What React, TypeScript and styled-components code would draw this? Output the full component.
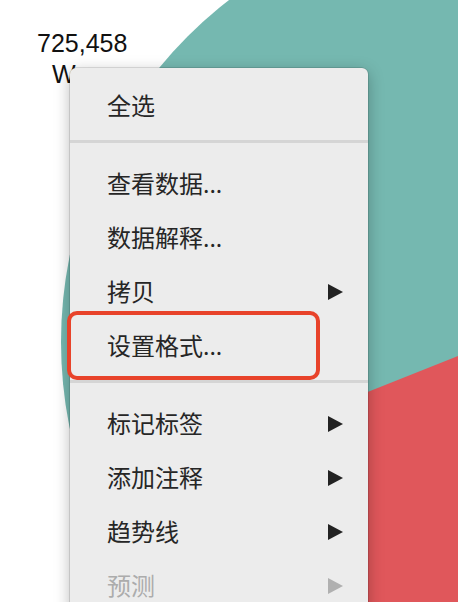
import { FC } from "react";
import styled, { createGlobalStyle } from "styled-components";

const GlobalStyle = createGlobalStyle`
  html, body {
    margin: 0;
    padding: 0;
    background: #ffffff;
  }
  body {
    font-family: "Noto Sans", "Noto Sans CJK SC", sans-serif;
  }
`;

interface MenuEntry {
  label: string;
  submenu?: boolean;
  disabled?: boolean;
  highlighted?: boolean;
}

const groups: MenuEntry[][] = [
  [{ label: "全选" }],
  [
    { label: "查看数据..." },
    { label: "数据解释..." },
    { label: "拷贝", submenu: true },
    { label: "设置格式...", highlighted: true },
  ],
  [
    { label: "标记标签", submenu: true },
    { label: "添加注释", submenu: true },
    { label: "趋势线", submenu: true },
    { label: "预测", submenu: true, disabled: true },
  ],
];

const PieChart: FC = () => (
  <Pie viewBox="0 0 458 602" width={458} height={602}>
    <circle cx={493} cy={342} r={432} fill="#75b8b0" />
    <path
      d="M493,342 L709,716 A432,432 0 0,1 91.8,501.8 Z"
      fill="#e0575b"
    />
  </Pie>
);

const SubmenuArrow: FC<{ disabled?: boolean }> = ({ disabled }) => (
  <Arrow viewBox="0 0 15 16" width={15} height={16} $disabled={disabled}>
    <polygon points="0,0 15,8 0,16" />
  </Arrow>
);

export const ContextMenu: FC = () => (
  <Menu>
    {groups.map((group, gi) => (
      <Group key={gi}>
        {gi > 0 && <Separator />}
        {group.map((item) => (
          <Item
            key={item.label}
            $disabled={item.disabled}
            $highlighted={item.highlighted}
          >
            <Label>{item.label}</Label>
            {item.submenu && <SubmenuArrow disabled={item.disabled} />}
          </Item>
        ))}
      </Group>
    ))}
  </Menu>
);

const App: FC = () => (
  <>
    <GlobalStyle />
    <Stage>
      <PieChart />
      <MarkLabel>
        725,458
        <br />
        <Indent>W</Indent>
      </MarkLabel>
      <ContextMenu />
    </Stage>
  </>
);

export default App;

const Stage = styled.div`
  position: relative;
  width: 458px;
  height: 602px;
  overflow: hidden;
  background: #ffffff;
`;

const Pie = styled.svg`
  position: absolute;
  inset: 0;
  display: block;
`;

const MarkLabel = styled.div`
  position: absolute;
  left: 37px;
  top: 28px;
  font-family: "Liberation Sans", Arial, sans-serif;
  font-size: 25px;
  line-height: 31px;
  color: #111111;
`;

const Indent = styled.span`
  padding-left: 15px;
`;

const Menu = styled.div`
  position: absolute;
  left: 70px;
  top: 68px;
  width: 298px;
  padding-top: 11px;
  background: #ececec;
  border-radius: 6px 6px 0 0;
  box-shadow: 0 0 0 0.5px rgba(0, 0, 0, 0.22), 0 4px 16px rgba(0, 0, 0, 0.28);
  display: flex;
  flex-direction: column;
`;

const Group = styled.div`
  display: flex;
  flex-direction: column;
`;

const Separator = styled.div`
  height: 3px;
  background: #d5d5d5;
  margin: 7px 0 14px;
`;

const Item = styled.div<{ $disabled?: boolean; $highlighted?: boolean }>`
  position: relative;
  display: flex;
  align-items: center;
  justify-content: space-between;
  height: 54px;
  padding: 0 25px 0 37px;
  color: ${({ $disabled }) => ($disabled ? "#acacac" : "#262626")};

  ${({ $highlighted }) =>
    $highlighted &&
    `
    &::after {
      content: "";
      position: absolute;
      left: -3px;
      top: -8px;
      width: 253px;
      height: 69px;
      box-sizing: border-box;
      border: 4px solid #e8432a;
      border-radius: 10px;
    }
  `}
`;

const Label = styled.span`
  font-size: 24px;
  line-height: 1;
`;

const Arrow = styled.svg<{ $disabled?: boolean }>`
  display: block;
  fill: ${({ $disabled }) => ($disabled ? "#b0b0b0" : "#222222")};
`;
